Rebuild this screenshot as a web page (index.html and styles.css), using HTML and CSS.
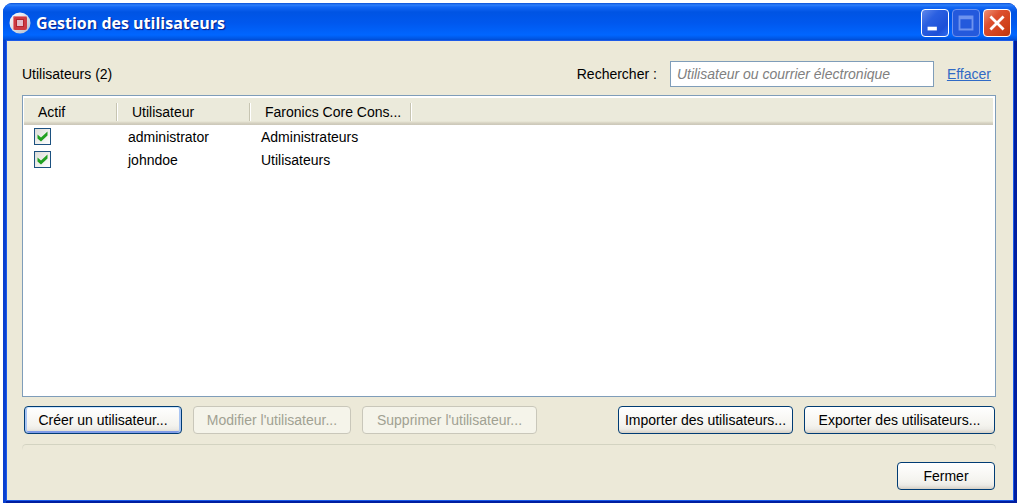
FILE: index.html
```
<!DOCTYPE html>
<html lang="fr">
<head>
<meta charset="UTF-8">
<meta name="viewport" content="width=device-width, initial-scale=1.0">
<title>Gestion des utilisateurs</title>
<link rel="stylesheet" href="styles.css">
</head>
<body>
  <div class="window">
    <header class="titlebar">
      <svg class="app-icon" viewBox="0 0 22 22" aria-hidden="true">
        <defs>
          <linearGradient id="disc" x1="0" y1="0" x2="1" y2="1">
            <stop offset="0" stop-color="#ffffff"/>
            <stop offset="1" stop-color="#b3bccb"/>
          </linearGradient>
        </defs>
        <circle cx="11" cy="11" r="10.5" fill="url(#disc)"/>
        <rect x="4" y="4" width="14" height="14" rx="2" fill="#cc3a41"/>
        <path d="M4.500 17V6a1.500 1.500 0 0 1 1.500-1.500H17" fill="none" stroke="#e58085" stroke-width="1"/>
        <rect x="7.500" y="7.500" width="7" height="7" fill="#e3bcc8" stroke="#b3242d"/>
      </svg>
      <h1>Gestion des utilisateurs</h1>
      <div class="window-controls">
        <button type="button" class="control" aria-label="Réduire">
          <svg viewBox="0 0 28 28"><rect x="6" y="18" width="10" height="4" fill="#fff"/></svg>
        </button>
        <button type="button" class="control control-max" aria-label="Agrandir" disabled>
          <svg viewBox="0 0 28 28"><path d="M7 7h14v14H7z M7 9h14" fill="none" stroke="#6f93ee" stroke-width="2"/></svg>
        </button>
        <button type="button" class="control control-close" aria-label="Fermer la fenêtre">
          <svg viewBox="0 0 28 28"><path d="M8 8l12 12M20 8L8 20" fill="none" stroke="#fff" stroke-width="3" stroke-linecap="square"/></svg>
        </button>
      </div>
    </header>

    <main class="content">
      <div class="toolbar">
        <h2>Utilisateurs (2)</h2>
        <label for="search">Rechercher :</label>
        <input type="text" id="search" class="search" placeholder="Utilisateur ou courrier électronique">
        <a href="#" class="clear">Effacer</a>
      </div>

      <div class="list">
        <table>
          <colgroup>
            <col class="col-active">
            <col class="col-user">
            <col class="col-role">
            <col>
          </colgroup>
          <thead>
            <tr>
              <th>Actif</th>
              <th>Utilisateur</th>
              <th>Faronics Core Cons...</th>
              <td></td>
            </tr>
          </thead>
          <tbody>
            <tr>
              <td><input type="checkbox" aria-label="administrator actif" checked></td>
              <td>administrator</td>
              <td>Administrateurs</td>
              <td></td>
            </tr>
            <tr>
              <td><input type="checkbox" aria-label="johndoe actif" checked></td>
              <td>johndoe</td>
              <td>Utilisateurs</td>
              <td></td>
            </tr>
          </tbody>
        </table>
      </div>

      <div class="actions">
        <button type="button" class="btn btn-default">Créer un utilisateur...</button>
        <button type="button" class="btn" disabled>Modifier l'utilisateur...</button>
        <button type="button" class="btn btn-wide" disabled>Supprimer l'utilisateur...</button>
        <button type="button" class="btn btn-wide btn-import">Importer des utilisateurs...</button>
        <button type="button" class="btn btn-export">Exporter des utilisateurs...</button>
      </div>

      <div class="divider"></div>

      <footer class="footer">
        <button type="button" class="btn btn-close">Fermer</button>
      </footer>
    </main>
  </div>
</body>
</html>
```
FILE: styles.css
```
* {
  box-sizing: border-box;
}
body {
  margin: 0;
  padding: 3px 1px 0 3px;
  min-height: 100vh;
  display: flex;
  background-color: #ffffff;
  color: #000000;
  font-family: "Liberation Sans", Arial, sans-serif;
  font-size: 14px;
}
button,
input {
  font: inherit;
}
.window {
  flex: 1;
  min-width: 0;
  display: flex;
  flex-direction: column;
  border-radius: 9px 9px 0 0;
  overflow: hidden;
  background: linear-gradient(90deg, #0a40d0 50%, #001ea0 50%);
}

/* title bar */
.titlebar {
  display: flex;
  align-items: center;
  height: 38px;
  padding: 2px 6px 0 6px;
  background: linear-gradient(#0a50d8 0, #2f80fa 2px, #1468f5 4px, #0054e3 9px, #0058ee 20px, #0066ff 32px, #0054e0 36px, #0040c4 38px);
}
.app-icon {
  width: 22px;
  height: 22px;
  margin-right: 5px;
}
.titlebar h1 {
  flex: 1;
  margin: 0;
  color: #ffffff;
  font-family: "Open Sans", "Trebuchet MS", sans-serif;
  font-size: 16px;
  font-weight: bold;
  text-shadow: 1px 1px 1px #0a1883;
}
.window-controls {
  display: flex;
  gap: 3px;
}
.control {
  width: 28px;
  height: 28px;
  padding: 0;
  border: 1px solid #ffffff;
  border-radius: 4px;
  background: linear-gradient(135deg, #6088ec 0%, #2a5fe0 35%, #1c50d8 75%, #2f6cf0 100%);
}
.control svg {
  display: block;
  width: 100%;
  height: 100%;
}
.control-max {
  border-color: #6f93ee;
  background: #2459dc;
}
.control-close {
  background: linear-gradient(135deg, #ee9277 0%, #dd5030 35%, #cf4018 75%, #b8360f 100%);
}

/* window body */
.content {
  flex: 1;
  display: flex;
  flex-direction: column;
  margin: 0 4px 3px 4px;
  padding: 20px 17px 10px 15px;
  background-color: #ece9d8;
  box-shadow: 0 0 0 1px #1c5ae8, 0 3px 0 1px #001ea0;
}
.toolbar {
  display: flex;
  align-items: center;
  margin-bottom: 8px;
}
.toolbar h2 {
  flex: 1;
  margin: 0;
  font-size: 14px;
  font-weight: normal;
}
.search {
  width: 264px;
  height: 26px;
  margin: 0 13px;
  padding: 0 6px;
  border: 1px solid #7f9db9;
  background-color: #ffffff;
}
.search::placeholder {
  color: #808080;
  font-style: italic;
  opacity: 1;
}
.clear {
  margin-right: 5px;
  color: #316ac5;
}

/* user list */
.list {
  flex: 1;
  padding: 2px 2px 2px 1px;
  border: 1px solid #7f9db9;
  background-color: #ffffff;
}
table {
  width: 100%;
  table-layout: fixed;
  border-collapse: collapse;
}
.col-active {
  width: 94px;
}
.col-user {
  width: 133px;
}
.col-role {
  width: 161px;
}
thead tr {
  height: 27px;
  background: linear-gradient(#ebeadb 0, #ebeadb 23px, #e2dfce 24px, #d6d2c2 25px, #cbc7b8 27px);
}
th {
  padding: 0 0 0 14px;
  font-weight: normal;
  text-align: left;
  white-space: nowrap;
  background: linear-gradient(#c7c5b2, #c7c5b2) right 1px center / 1px 18px no-repeat,
    linear-gradient(#ffffff, #ffffff) right center / 1px 18px no-repeat;
}
tbody td {
  height: 23px;
  padding: 0 0 0 10px;
}
input[type="checkbox"] {
  appearance: none;
  display: block;
  width: 17px;
  height: 17px;
  margin: 0;
  border: 1px solid #1c5180;
  background: linear-gradient(135deg, #dcdcd7, #ffffff);
}
input[type="checkbox"]:checked {
  background: url("data:image/svg+xml,%3Csvg xmlns='http://www.w3.org/2000/svg' viewBox='0 0 15 15'%3E%3Cpath d='M2.500 5.500L6 8.500L12.500 2.500V6.500L6 12.500L2.500 9.500z' fill='%2321a121'/%3E%3C/svg%3E") center / 15px 15px no-repeat,
    linear-gradient(135deg, #dcdcd7, #ffffff);
}

/* buttons */
.actions {
  display: flex;
  gap: 11px;
  padding: 9px 1px 10px 2px;
}
.btn {
  min-width: 158px;
  height: 28px;
  padding: 0;
  border: 1px solid #003c74;
  border-radius: 4px;
  background: linear-gradient(#ffffff, #f4f3ee 70%, #ecebe6 85%, #d6d0c5);
  color: #000000;
  white-space: nowrap;
}
.btn:disabled {
  border-color: #c9c7ba;
  background: #f5f4ea;
  color: #a1a192;
}
.btn-default {
  box-shadow: inset 0 1px 0 #cee7ff, inset 2px 0 0 #a9c5f3, inset -2px 0 0 #a9c5f3, inset 0 -2px 0 #7f9be8;
}
.btn-wide {
  min-width: 175px;
}
.btn-import {
  margin-left: auto;
}
.btn-export {
  min-width: 191px;
}
.divider {
  height: 6px;
  border: 1px solid #d0d0bf;
  border-bottom: 0;
  border-radius: 4px 4px 0 0;
  -webkit-mask-image: linear-gradient(#000000, transparent);
  mask-image: linear-gradient(#000000, transparent);
}
.footer {
  display: flex;
  justify-content: flex-end;
  padding: 12px 1px 0 0;
}
.btn-close {
  min-width: 98px;
}
```
